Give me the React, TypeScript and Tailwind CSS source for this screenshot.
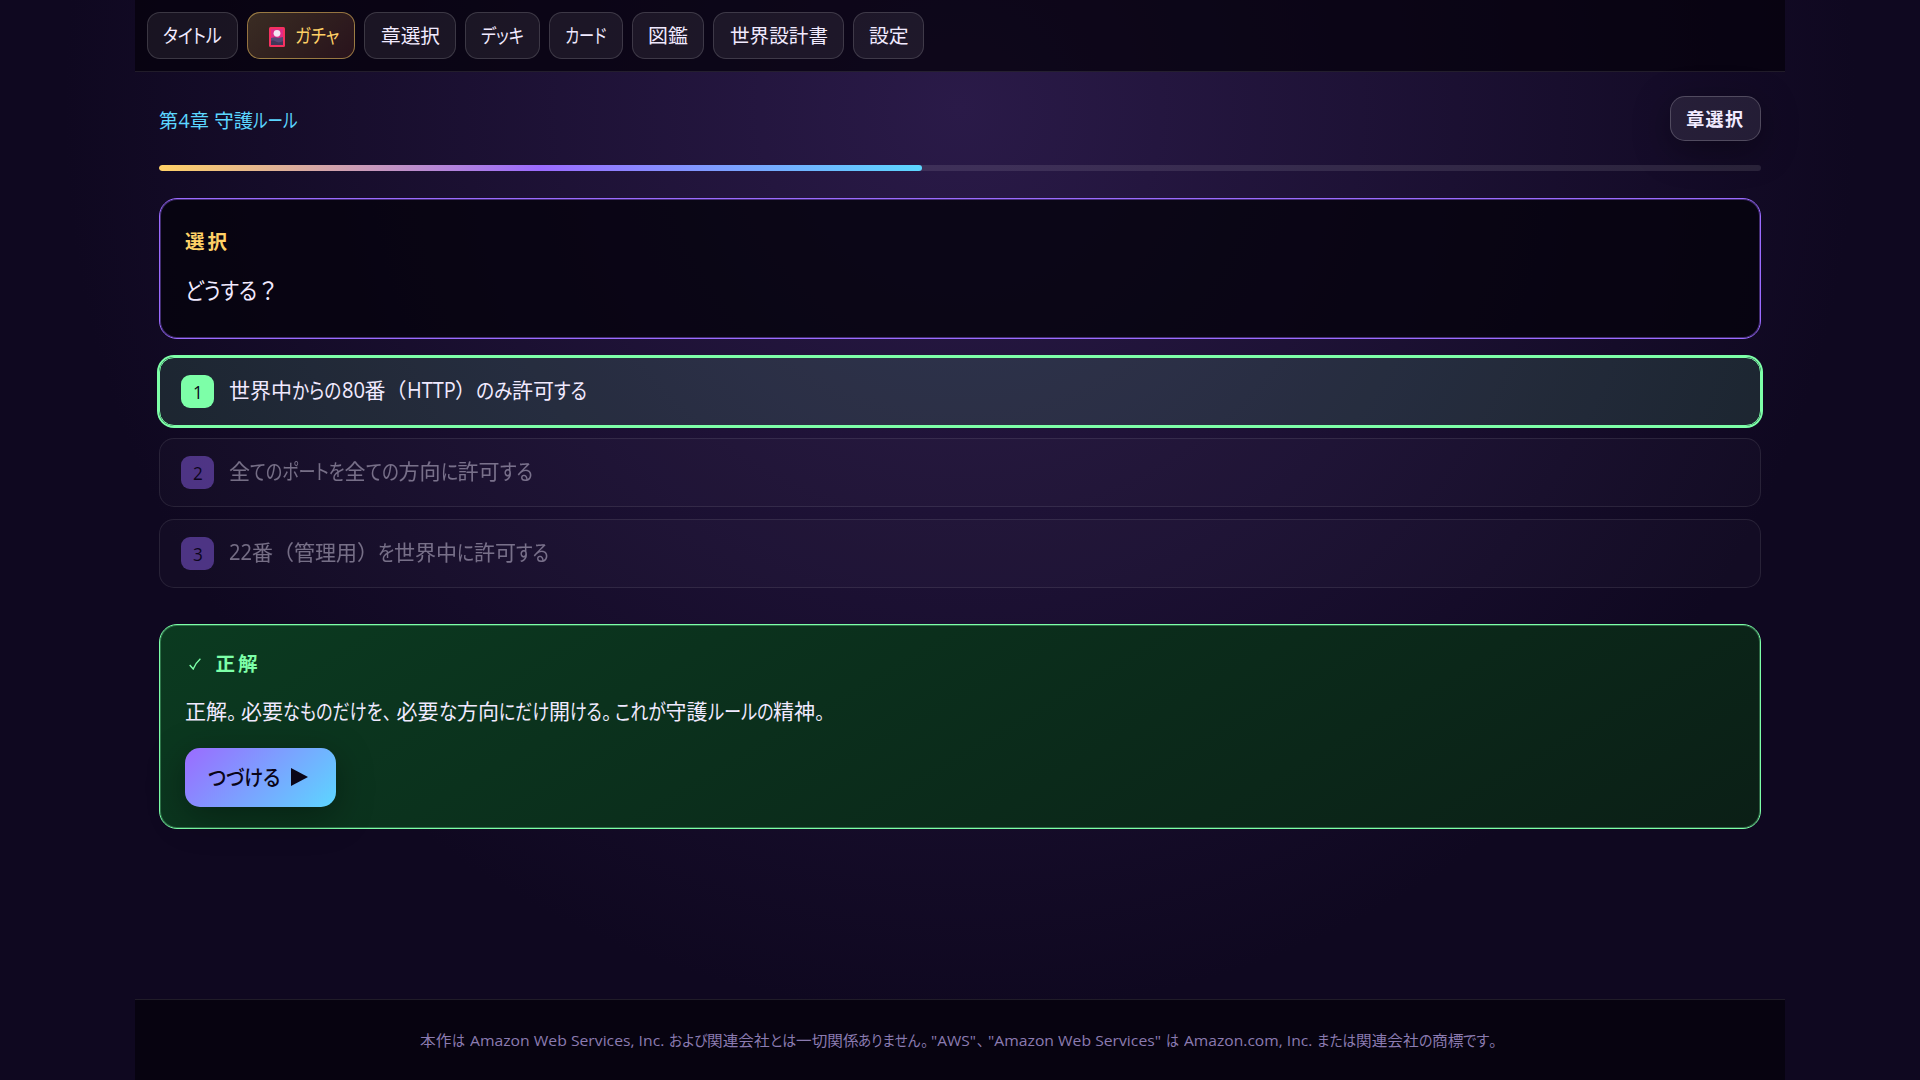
import { useLayoutEffect, useRef } from "react"

type Run = [text: string, width: number]

const NAV: { runs: Run[]; gacha?: boolean }[] = [
  { runs: [["タイトル", 59.2]] },
  { runs: [["ガチャ", 44]], gacha: true },
  { runs: [["章選択", 59.5]] },
  { runs: [["デッキ", 43]] },
  { runs: [["カード", 41.5]] },
  { runs: [["図鑑", 39.8]] },
  { runs: [["世界設計書", 98.5]] },
  { runs: [["設定", 39.7]] },
]

const CHAPTER: Run[] = [["第", 19.5], ["4", 11], ["章", 19.5], [" ", 5.3], ["守護", 39], ["ルール", 44.7]]

const QUESTION: Run[] = [["どうする", 72], ["？", 22.5]]

const CHOICES: Run[][] = [
  [["世界中", 63], ["からの", 49.5], ["80", 23], ["番", 21], ["（", 21], ["HTTP", 48.5], ["）", 20.5], ["のみ", 36.5], ["許可", 42], ["する", 33]],
  [["全", 21], ["てのポートを", 94.5], ["全", 21], ["ての", 33], ["方向", 42], ["に", 17], ["許可", 42], ["する", 33]],
  [["22", 23], ["番", 21], ["（", 21], ["管理用", 63], ["）", 21], ["を", 16], ["世界中", 63], ["に", 17], ["許可", 42], ["する", 33]],
]

const FEEDBACK: Run[] = [
  ["正解", 42], ["。", 10], [" ", 4], ["必要", 42], ["なものだけを", 99.5], ["、", 9], [" ", 5], ["必要", 42], ["な", 18.5],
  ["方向", 42], ["にだけ", 50], ["開", 21], ["ける", 31.5], ["。", 10], [" ", 3], ["これが", 51], ["守護", 42], ["ルールの", 65.5],
  ["精神", 42], ["。", 10],
]

const NOTICE: Run[] = [
  ["本作", 31.5], ["は", 13], [" ", 5], ["Amazon Web Services, Inc.", 194], [" ", 5], ["および", 38.5],
  ["関連会社", 62.5], ["とは", 26], ["一切関係", 62.5], ["ありません", 62.5], ["。", 7.5], [" ", 3], ['"AWS"', 45.5], ["、", 7.5], [" ", 4],
  ['"Amazon Web Services"', 173], [" ", 5], ["は", 13], [" ", 5], ["Amazon.com, Inc.", 128], [" ", 5],
  ["または", 39], ["関連会社", 62.5], ["の", 13], ["商標", 31.5], ["です", 26], ["。", 8],
]

const FULL_WIDTH = /^[（）？]$/

/* Squeezes one run of glyphs to a set advance, so kana can sit narrower than kanji */
function Fit({ text, width }: { text: string; width: number }) {
  const ref = useRef<HTMLSpanElement>(null)
  useLayoutEffect(() => {
    const el = ref.current
    if (el && el.offsetWidth > 0 && text.trim()) {
      el.style.transform = `scaleX(${width / el.offsetWidth})`
    }
  }, [text, width])
  return (
    <span className="inline-block whitespace-pre" style={{ width }}>
      <span
        ref={ref}
        className={
          FULL_WIDTH.test(text)
            ? "inline-block origin-left whitespace-pre [font-feature-settings:normal]"
            : "inline-block origin-left whitespace-pre"
        }
      >
        {text}
      </span>
    </span>
  )
}

function Line({ runs }: { runs: Run[] }) {
  return (
    <span className="inline-flex whitespace-pre">
      {runs.map(([text, width], i) => (
        <Fit key={i} text={text} width={width} />
      ))}
    </span>
  )
}

function FlowerCard() {
  return (
    <svg className="ml-[5.5px] mr-[10.5px] h-5 w-4 shrink-0 translate-y-px" viewBox="0 0 16 20" aria-hidden>
      <rect width="16" height="20" rx="1.5" fill="#f5315f" />
      <rect x="2" y="2" width="12" height="9" fill="#e02c88" />
      <path d="M2 11c3-1 5-1 7 0l5-1v8H2z" fill="#574876" />
      <path d="M2 18v-4c2-1 4 0 6 1s4 0 6-1v4z" fill="#413659" />
      <circle cx="8" cy="6.3" r="3.4" fill="#f1e6f2" />
    </svg>
  )
}

export default function App() {
  return (
    <div
      className="h-[1080px] overflow-hidden bg-[radial-gradient(ellipse_at_50%_10%,#2a1a48_0%,#0f0820_66%,#0f0820_100%)] text-[#f1eaff] [font-feature-settings:'palt'] [font-family:'Open_Sans','Noto_Sans_CJK_JP',sans-serif]"
    >
      <div className="mx-auto flex h-full w-[1650px] flex-col">
        <nav className="flex h-[71.5px] shrink-0 gap-[9px] border-b border-white/10 bg-[#05020c]/75 p-3 pb-0 text-[19.5px]">
          {NAV.map((item, i) => (
            <button
              key={i}
              className={
                item.gacha
                  ? "flex h-[46.5px] items-center rounded-[13px] border border-[#ffd166]/50 bg-[linear-gradient(135deg,rgba(255,209,102,.2),rgba(255,120,80,.13))] px-[15px] pt-px leading-none text-[#ffd166]"
                  : "flex h-[46.5px] items-center rounded-[13px] border border-white/15 bg-white/[.07] px-[15.1px] pt-px leading-none"
              }
            >
              {item.gacha && <FlowerCard />}
              <Line runs={item.runs} />
            </button>
          ))}
        </nav>

        <main className="flex flex-1 flex-col px-6 pt-6">
          <header className="flex h-[45.5px] items-center justify-between">
            <div className="pt-1 text-[19.5px] leading-none text-[#5cd6ff]">
              <Line runs={CHAPTER} />
            </div>
            <button className="flex h-[45.5px] w-[91.5px] items-center justify-center rounded-[15px] border border-white/20 bg-white/[.08] pt-0.5 text-[18px] leading-none font-bold tracking-[1.4px] shadow-[0_9px_36px_rgba(0,0,0,.35)]">
              章選択
            </button>
          </header>

          <div className="mt-6 h-1.5 shrink-0 overflow-hidden rounded-full bg-white/10">
            <div className="h-full w-[47.65%] rounded-full bg-[linear-gradient(90deg,#ffd166,#9b6bff,#5cd6ff)]" />
          </div>

          <section className="mt-[27px] h-[141px] shrink-0 rounded-[18px] border border-[#9b6bff] bg-[#05020c]/80 px-[25px] shadow-[inset_0_0_0_1px_rgba(155,107,255,.4)]">
            <h2 className="mt-[33px] text-[19.5px] leading-5 font-bold tracking-[2.9px] text-[#ffd166]">選択</h2>
            <p className="mt-[27px] text-[22.5px] leading-6">
              <Line runs={QUESTION} />
            </p>
          </section>

          <div className="mt-[18px] flex flex-col gap-3">
            {CHOICES.map((runs, i) => (
              <button
                key={i}
                className={
                  i === 0
                    ? "flex h-[69px] items-center gap-[15px] rounded-[15px] border border-[#7dffa8] bg-[#7dffa8]/12 px-[21px] text-[21px] leading-none shadow-[0_0_0_2px_#7dffa8]"
                    : "flex h-[69px] items-center gap-[15px] rounded-[15px] border border-white/20 bg-white/[.05] px-[21px] text-[21px] leading-none opacity-45"
                }
              >
                <span
                  className={
                    i === 0
                      ? "flex h-[33px] w-[33px] items-center justify-center rounded-[9px] bg-[#7dffa8] pt-px pl-px text-[18px] text-[#0a0518]"
                      : "flex h-[33px] w-[33px] items-center justify-center rounded-[9px] bg-[#9b6bff] pt-px pl-px text-[18px] text-[#0a0518]"
                  }
                >
                  <Fit text={String(i + 1)} width={9.5} />
                </span>
                <span className="pb-[1.5px]">
                  <Line runs={runs} />
                </span>
              </button>
            ))}
          </div>

          <section className="mt-9 h-[205px] shrink-0 rounded-[18px] border border-[#7dffa8] bg-[linear-gradient(150deg,#0b3a20,#0b1f16)] px-[25px] shadow-[inset_0_0_0_1px_rgba(125,255,168,.3)]">
            <h3 className="mt-[29px] flex h-5 items-center text-[19.5px] leading-none font-bold tracking-[2.9px] text-[#7dffa8]">
              <svg className="mr-[14.5px] ml-1 h-3 w-3" viewBox="0 0 12 12" fill="none" stroke="currentColor" strokeWidth="1.4" aria-hidden>
                <path d="M.7 7 4.2 11 Q6.5 5 11.4.7" />
              </svg>
              正解
            </h3>
            <p className="mt-[25px] text-[21px] leading-6">
              <Line runs={FEEDBACK} />
            </p>
            <button className="mt-[25px] -ml-[0.5px] flex h-[58.5px] w-[151.5px] items-center rounded-[15px] bg-[linear-gradient(135deg,#9b6bff,#5cd6ff)] pl-[23.5px] text-[21px] leading-none font-medium text-[#0a0518] shadow-[0_9px_36px_rgba(0,0,0,.35)]">
              <Fit text="つづける" width={72} />
              <svg className="ml-[11px] h-[18px] w-[17px]" viewBox="0 0 17 18" fill="currentColor" aria-hidden>
                <path d="M0 0 17 9 0 18z" />
              </svg>
            </button>
          </section>
        </main>

        <footer className="flex h-[81px] shrink-0 items-center justify-center border-t border-white/10 bg-[#05020c]/80 pr-[3px] text-[15px] leading-none text-[#8b7bb0]">
          <Line runs={NOTICE} />
        </footer>
      </div>
    </div>
  )
}
